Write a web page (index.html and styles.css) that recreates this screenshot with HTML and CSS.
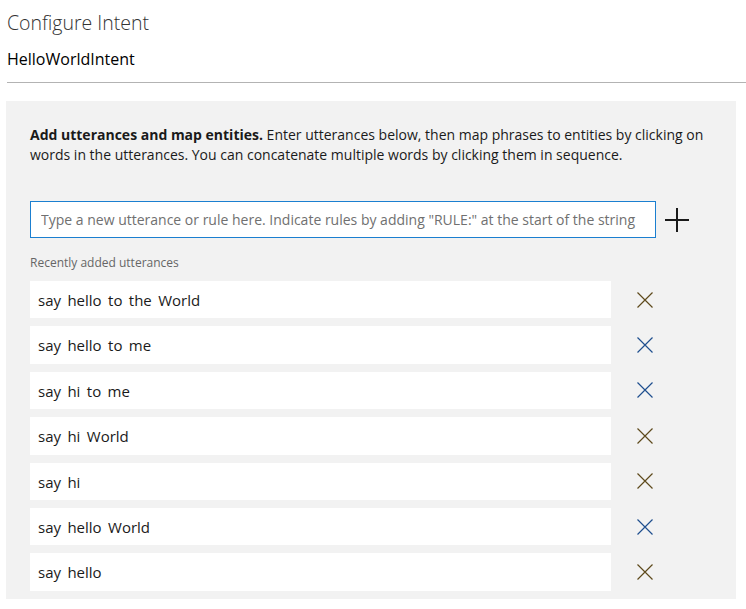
FILE: index.html
```html
<!DOCTYPE html>
<html lang="en">
<head>
<meta charset="utf-8">
<title>Configure Intent</title>
<link rel="stylesheet" href="styles.css">
</head>
<body>
<header class="page-header">
  <h1 class="title">Configure Intent</h1>
  <h2 class="subtitle">HelloWorldIntent</h2>
</header>
<hr class="divider">
<section class="panel">
  <p class="intro"><strong>Add utterances and map entities.</strong> Enter utterances below, then map phrases to entities by clicking on words in the utterances. You can concatenate multiple words by clicking them in sequence.</p>
  <div class="input-row">
    <input class="utterance-input" type="text" placeholder="Type a new utterance or rule here. Indicate rules by adding &quot;RULE:&quot; at the start of the string">
    <button class="add-btn" aria-label="Add">
      <svg width="26" height="26" viewBox="0 0 26 26"><path d="M13 1V25M1 13H25" stroke="#1a1a1a" stroke-width="2" fill="none"/></svg>
    </button>
  </div>
  <div class="recent-label">Recently added utterances</div>
  <ul class="list">
    <li class="item"><div class="utt"><span>say</span> <span>hello</span> <span>to</span> <span>the</span> <span>World</span></div><button class="del warm" aria-label="Delete"><svg width="16" height="16" viewBox="0 0 16 16"><path d="M0.5 0.5L15.5 15.5M15.5 0.5L0.5 15.5" /></svg></button></li>
    <li class="item"><div class="utt"><span>say</span> <span>hello</span> <span>to</span> <span>me</span></div><button class="del cool" aria-label="Delete"><svg width="16" height="16" viewBox="0 0 16 16"><path d="M0.5 0.5L15.5 15.5M15.5 0.5L0.5 15.5" /></svg></button></li>
    <li class="item"><div class="utt"><span>say</span> <span>hi</span> <span>to</span> <span>me</span></div><button class="del cool" aria-label="Delete"><svg width="16" height="16" viewBox="0 0 16 16"><path d="M0.5 0.5L15.5 15.5M15.5 0.5L0.5 15.5" /></svg></button></li>
    <li class="item"><div class="utt"><span>say</span> <span>hi</span> <span>World</span></div><button class="del warm" aria-label="Delete"><svg width="16" height="16" viewBox="0 0 16 16"><path d="M0.5 0.5L15.5 15.5M15.5 0.5L0.5 15.5" /></svg></button></li>
    <li class="item"><div class="utt"><span>say</span> <span>hi</span></div><button class="del warm" aria-label="Delete"><svg width="16" height="16" viewBox="0 0 16 16"><path d="M0.5 0.5L15.5 15.5M15.5 0.5L0.5 15.5" /></svg></button></li>
    <li class="item"><div class="utt"><span>say</span> <span>hello</span> <span>World</span></div><button class="del cool" aria-label="Delete"><svg width="16" height="16" viewBox="0 0 16 16"><path d="M0.5 0.5L15.5 15.5M15.5 0.5L0.5 15.5" /></svg></button></li>
    <li class="item"><div class="utt"><span>say</span> <span>hello</span></div><button class="del warm" aria-label="Delete"><svg width="16" height="16" viewBox="0 0 16 16"><path d="M0.5 0.5L15.5 15.5M15.5 0.5L0.5 15.5" /></svg></button></li>
  </ul>
</section>
</body>
</html>
```

FILE: styles.css
```css
html, body {
  margin: 0;
  padding: 0;
  background: #ffffff;
}
body {
  font-family: "Open Sans", "Noto Sans", "Liberation Sans", sans-serif;
  color: #1a1a1a;
}
.page-header {
  padding: 9px 0 0 7px;
}
.title {
  margin: 0;
  font-size: 19.5px;
  font-weight: 300;
  line-height: 28px;
  color: #333;
}
.subtitle {
  margin: 12px 0 0 0;
  font-size: 16px;
  font-weight: 400;
  line-height: 20px;
  color: #000;
}
.divider {
  margin: 13px 0 0 7px;
  border: 0;
  border-top: 1px solid #b3b3b3;
  height: 0;
}
.panel {
  margin: 18px 10px 0 6px;
  background: #f2f2f2;
  padding: 24px 0 8px 24px;
}
.intro {
  margin: 0;
  font-size: 14px;
  line-height: 20px;
  color: #1a1a1a;
  padding-right: 20px;
}
.intro strong {
  font-weight: 700;
}
.input-row {
  display: flex;
  align-items: center;
  margin-top: 36px;
}
.utterance-input {
  box-sizing: border-box;
  width: 626px;
  height: 37px;
  border: 1px solid #1b7fd0;
  background: #fff;
  padding: 0 9px 0 10px;
  font-family: inherit;
  font-size: 14px;
  color: #333;
  outline: none;
}
.utterance-input::placeholder {
  color: #707070;
}
.add-btn {
  width: 42px;
  height: 37px;
  border: 0;
  padding: 0;
  background: transparent;
  display: flex;
  align-items: center;
  justify-content: center;
}
.recent-label {
  margin-top: 17px;
  font-size: 12px;
  line-height: 16px;
  color: #666;
}
.list {
  list-style: none;
  margin: 10px 0 0 0;
  padding: 0;
  display: flex;
  flex-direction: column;
  gap: 8px;
}
.item {
  display: flex;
  align-items: center;
}
.utt {
  box-sizing: border-box;
  width: 581px;
  height: 37.4px;
  line-height: 38px;
  background: #fff;
  padding: 0 8px;
  font-size: 15px;
  color: #1a1a1a;
  white-space: pre;
}
.utt span {
  margin-right: 2.5px;
}
.del {
  width: 68px;
  height: 37px;
  border: 0;
  padding: 0;
  background: transparent;
  display: flex;
  align-items: center;
  justify-content: center;
}
.del svg path {
  fill: none;
  stroke-width: 1.2;
}
.del.warm svg path {
  stroke: #5e4a1c;
}
.del.cool svg path {
  stroke: #1f4f8f;
}
```
